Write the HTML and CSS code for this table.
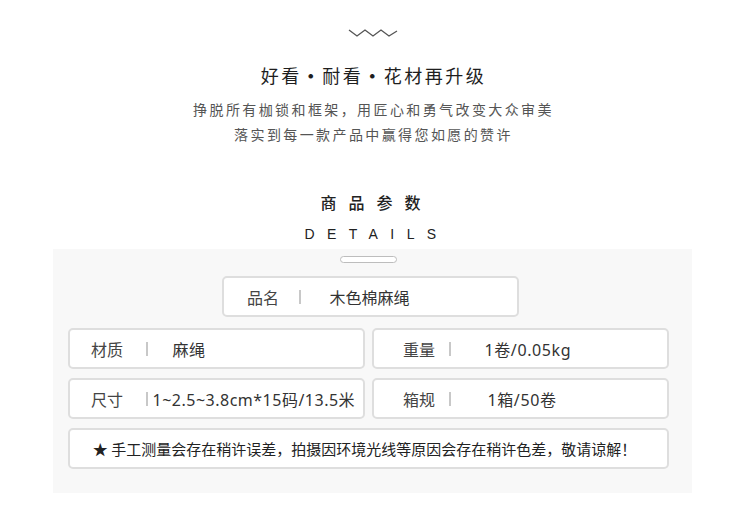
FILE: index.html
```html
<!DOCTYPE html>
<html lang="zh-CN">
<head>
<meta charset="utf-8">
<link rel="stylesheet" href="styles.css">
</head>
<body>
<div class="page">
  <svg class="zigzag" width="745" height="10" viewBox="0 0 745 10">
    <polyline points="349,2 357,8 365,2 373,8 381,2 389,8 397,3" fill="none" stroke="#555" stroke-width="1.3" stroke-linejoin="miter"/>
  </svg>
  <h1 class="title">好看<span class="dot">·</span>耐看<span class="dot">·</span>花材再升级</h1>
  <p class="slogan">挣脱所有枷锁和框架，用匠心和勇气改变大众审美</p>
  <p class="slogan">落实到每一款产品中赢得您如愿的赞许</p>
  <h2 class="sec-cn">商品参数</h2>
  <div class="sec-en">DETAILS</div>
  <section class="panel">
    <div class="pill"></div>
    <div class="cell name">
      <span class="k">品名</span><span class="sep"></span><span class="v">木色棉麻绳</span>
    </div>
    <div class="grid">
      <div class="cell left">
        <span class="k">材质</span><span class="sep"></span><span class="v">麻绳</span>
      </div>
      <div class="cell right">
        <span class="k">重量</span><span class="sep"></span><span class="v">1卷/0.05kg</span>
      </div>
      <div class="cell left">
        <span class="k">尺寸</span><span class="sep"></span><span class="v v-tight">1~2.5~3.8cm*15码/13.5米</span>
      </div>
      <div class="cell right">
        <span class="k">箱规</span><span class="sep"></span><span class="v v-box">1箱/50卷</span>
      </div>
      <div class="cell note">★ 手工测量会存在稍许误差，拍摄因环境光线等原因会存在稍许色差，敬请谅解！</div>
    </div>
  </section>
</div>
</body>
</html>
```

FILE: styles.css
```css
* { box-sizing: border-box; }
html, body { margin: 0; padding: 0; background: #fff; }
body {
  font-family: "Noto Sans", "Noto Sans CJK SC", sans-serif;
  color: #222;
}
.page {
  width: 745px;
  text-align: center;
  padding-top: 28px;
}
.zigzag { display: block; }
.title {
  margin: 25px 0 10px 2px;
  font-family: "Noto Sans CJK SC", sans-serif;
  font-size: 18px;
  line-height: 24px;
  font-weight: 400;
  letter-spacing: 2.5px;
  color: #1e1e1e;
}
.dot {
  font-weight: 700;
}
.slogan {
  margin: 0 0 0 2px;
  font-family: "Noto Sans CJK SC", sans-serif;
  font-size: 14px;
  line-height: 25px;
  letter-spacing: 2.4px;
  color: #555;
}
.sec-cn {
  margin: 43px 0 0 8px;
  font-family: "Noto Sans CJK SC", sans-serif;
  font-size: 16px;
  line-height: 24px;
  font-weight: 500;
  letter-spacing: 12px;
  color: #222;
}
.sec-en {
  margin: 10px 0 0 8px;
  font-family: "Liberation Sans", sans-serif;
  font-size: 14px;
  line-height: 20px;
  letter-spacing: 12.4px;
  color: #222;
}
.panel {
  margin: 5px 0 0 53px;
  width: 639px;
  background: #f8f8f8;
  padding: 7px 0 24px;
  text-align: left;
}
.pill {
  margin-left: 287px;
  width: 57px;
  height: 7px;
  border: 1.5px solid #bdbdbd;
  border-radius: 4px;
  background: #fff;
}
.cell {
  display: flex;
  align-items: center;
  height: 41px;
  background: #fff;
  border: 2px solid #dedede;
  border-radius: 5px;
  font-size: 16px;
  color: #444;
  white-space: nowrap;
}
.cell.name {
  margin: 13px 0 0 169px;
  width: 297px;
}
.k {
  display: block;
  width: 76px;
  padding-left: 21px;
  color: #444;
}
.name .k { padding-left: 23px; width: 75px; }
.right .k { padding-left: 29px; width: 75px; }
.sep {
  display: block;
  width: 1.5px;
  height: 14px;
  background: #c8c8c8;
}
.v {
  display: block;
  margin-left: 25px;
  color: #333;
  letter-spacing: 0.6px;
}
.name .v { margin-left: 29px; letter-spacing: 0; }
.right .v { margin-left: 34px; }
.right .v-box { margin-left: 37px; }
.left .v-tight { margin-left: 5px; letter-spacing: 0.5px; }
.grid {
  margin: 11px 0 0 15px;
  display: grid;
  grid-template-columns: 297px 297px;
  column-gap: 7px;
  row-gap: 9px;
}
.cell.note {
  grid-column: 1 / 3;
  justify-content: center;
  font-family: "Noto Sans CJK SC", sans-serif;
  font-size: 15px;
  color: #222;
  padding-right: 8px;
}
```
